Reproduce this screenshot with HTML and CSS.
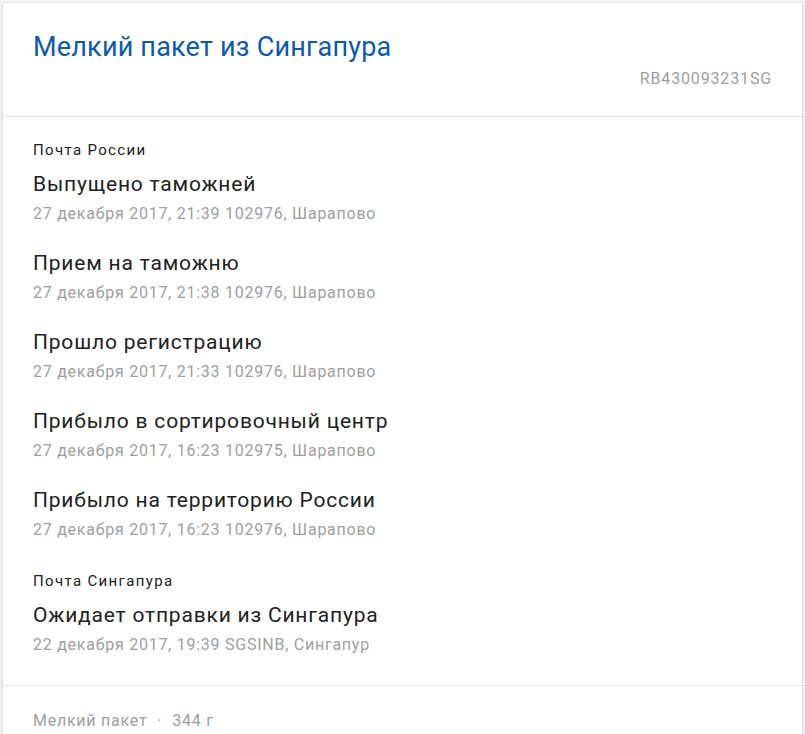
FILE: index.html
```html
<!DOCTYPE html>
<html lang="ru">
<head>
<meta charset="utf-8">
<title>Мелкий пакет из Сингапура</title>
<link rel="stylesheet" href="styles.css">
</head>
<body>
<div class="card">
  <header class="head">
    <h1 class="title">Мелкий пакет из Сингапура</h1>
    <div class="track">RB430093231SG</div>
  </header>
  <section class="events">
    <div class="group">
      <div class="source">Почта России</div>
      <div class="item">
        <div class="status">Выпущено таможней</div>
        <div class="meta">27 декабря 2017, 21:39 102976, Шарапово</div>
      </div>
      <div class="item">
        <div class="status">Прием на таможню</div>
        <div class="meta">27 декабря 2017, 21:38 102976, Шарапово</div>
      </div>
      <div class="item">
        <div class="status">Прошло регистрацию</div>
        <div class="meta">27 декабря 2017, 21:33 102976, Шарапово</div>
      </div>
      <div class="item">
        <div class="status">Прибыло в сортировочный центр</div>
        <div class="meta">27 декабря 2017, 16:23 102975, Шарапово</div>
      </div>
      <div class="item">
        <div class="status">Прибыло на территорию России</div>
        <div class="meta">27 декабря 2017, 16:23 102976, Шарапово</div>
      </div>
    </div>
    <div class="group">
      <div class="source">Почта Сингапура</div>
      <div class="item">
        <div class="status">Ожидает отправки из Сингапура</div>
        <div class="meta">22 декабря 2017, 19:39 SGSINB, Сингапур</div>
      </div>
    </div>
  </section>
  <footer class="foot">
    <span>Мелкий пакет</span><span class="dot">·</span><span>344 г</span>
  </footer>
</div>
</body>
</html>
```

FILE: styles.css
```css
html, body {
  margin: 0;
  padding: 0;
}
body {
  background: #f3f3f3;
  font-family: Roboto, "Noto Sans", Arial, sans-serif;
  padding: 3px 3px 0 3px;
  height: 731px;
  overflow: hidden;
}
.card {
  background: #fff;
  box-shadow: 0 1px 3px rgba(0,0,0,0.18), 0 0 1px rgba(0,0,0,0.12);
  min-height: 760px;
}
.head {
  padding: 28px 30px 27px 30px;
  border-bottom: 1px solid #e2e2e2;
}
.title {
  margin: 0;
  font-size: 27px;
  line-height: 32px;
  font-weight: 400;
  letter-spacing: 0.2px;
  color: #0b5aad;
}
.track {
  margin-top: 6px;
  text-align: right;
  font-size: 16px;
  line-height: 20px;
  letter-spacing: 0.85px;
  color: #9e9e9e;
}
.events {
  padding: 23px 30px 5px 30px;
  border-bottom: 1px solid #e2e2e2;
}
.group + .group {
  margin-top: 30px;
}
.source {
  font-size: 15px;
  line-height: 20px;
  letter-spacing: 1.35px;
  color: #212121;
  margin-bottom: 10px;
}
.item {
  margin-bottom: 24px;
}
.status {
  font-size: 21px;
  line-height: 28px;
  letter-spacing: 0.8px;
  color: #212121;
}
.meta {
  margin-top: 5px;
  font-size: 16px;
  line-height: 22px;
  letter-spacing: 0.75px;
  color: #9e9e9e;
}
.foot {
  padding: 25px 30px 24px 30px;
  font-size: 16px;
  line-height: 20px;
  letter-spacing: 0.75px;
  color: #9e9e9e;
}
.dot {
  margin: 0 10px;
}
```
